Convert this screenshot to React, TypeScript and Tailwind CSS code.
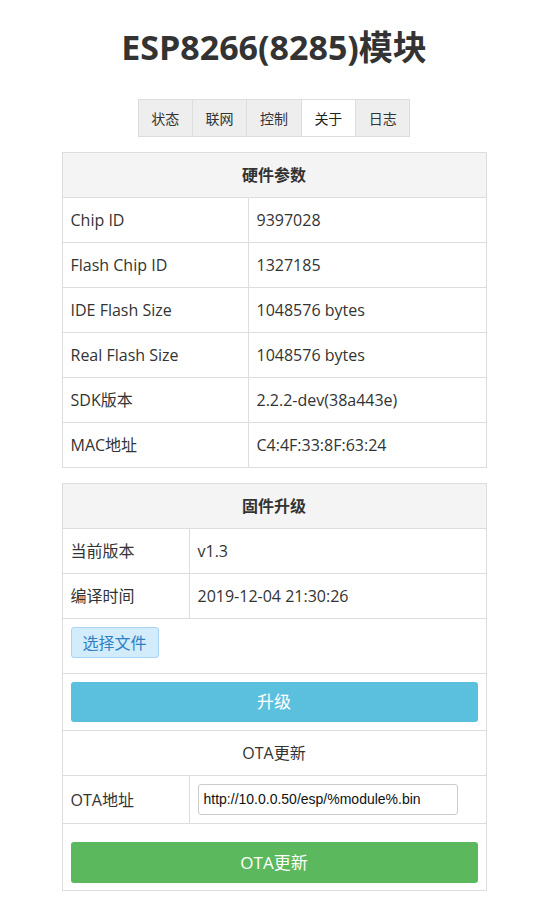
import React from "react";

const font = "font-['Open_Sans','Noto_Sans_CJK_SC',sans-serif]";

function Row({ label, value, leftW }: { label: string; value: string; leftW: string }) {
  return (
    <div className="flex h-[45px] border-t border-[#ddd]">
      <div className={`${leftW} shrink-0 border-r border-[#ddd] px-2 flex items-center`}>{label}</div>
      <div className="flex-1 px-2 flex items-center">{value}</div>
    </div>
  );
}

export default function App() {
  const tabs = ["状态", "联网", "控制", "关于", "日志"];
  return (
    <div className={`${font} w-[548px] min-h-[899px] bg-white text-[#333] text-[16px] flex flex-col items-center`}>
      <h1 className="mt-[27px] text-[34px] leading-[40px] font-bold text-[#333]">ESP8266(8285)模块</h1>
      <div className="mt-[32px] flex border-l border-y border-[#ddd]">
        {tabs.map((t) => (
          <div
            key={t}
            className={`w-[54.4px] h-[36px] border-r border-[#ddd] flex items-center justify-center text-[14px] ${
              t === "关于" ? "bg-white text-[#222]" : "bg-[#eee] text-[#333]"
            }`}
          >
            {t}
          </div>
        ))}
      </div>

      <div className="mt-[15px] w-[425px] border border-[#ddd]">
        <div className="h-[44px] bg-[#f4f4f4] flex items-center justify-center font-bold">硬件参数</div>
        <Row label="Chip ID" value="9397028" leftW="w-[186px]" />
        <Row label="Flash Chip ID" value="1327185" leftW="w-[186px]" />
        <Row label="IDE Flash Size" value="1048576 bytes" leftW="w-[186px]" />
        <Row label="Real Flash Size" value="1048576 bytes" leftW="w-[186px]" />
        <Row label="SDK版本" value="2.2.2-dev(38a443e)" leftW="w-[186px]" />
        <Row label="MAC地址" value="C4:4F:33:8F:63:24" leftW="w-[186px]" />
      </div>

      <div className="mt-[15px] mb-[8px] w-[425px] border border-[#ddd]">
        <div className="h-[44px] bg-[#f4f4f4] flex items-center justify-center font-bold">固件升级</div>
        <Row label="当前版本" value="v1.3" leftW="w-[127px]" />
        <Row label="编译时间" value="2019-12-04 21:30:26" leftW="w-[127px]" />
        <div className="h-[55px] border-t border-[#ddd] px-2 pt-2">
          <div className="inline-flex h-[31px] px-[11px] items-center rounded-[3px] border border-[#a6d5f7] bg-[#d3ecfc] text-[#2f80c2] text-[16px]">
            选择文件
          </div>
        </div>
        <div className="h-[57px] border-t border-[#ddd] px-2 pt-2">
          <div className="h-[40px] rounded-[3px] bg-[#5bc0de] text-white flex items-center justify-center text-[17px]">升级</div>
        </div>
        <div className="h-[45px] border-t border-[#ddd] flex items-center justify-center">OTA更新</div>
        <div className="flex h-[48px] border-t border-[#ddd]">
          <div className="w-[127px] shrink-0 border-r border-[#ddd] px-2 flex items-center">OTA地址</div>
          <div className="flex-1 px-2 flex items-center">
            <div className="w-[260px] h-[31px] rounded-[3px] border border-[#ccc] flex items-center px-[5px] font-['Liberation_Sans',Arial,sans-serif] text-[14px] text-[#111]">
              http://10.0.0.50/esp/%module%.bin
            </div>
          </div>
        </div>
        <div className="h-[67px] border-t border-[#ddd] px-2 pt-[18px]">
          <div className="h-[41px] rounded-[3px] bg-[#5cb85c] text-white flex items-center justify-center text-[17px]">OTA更新</div>
        </div>
      </div>
    </div>
  );
}
